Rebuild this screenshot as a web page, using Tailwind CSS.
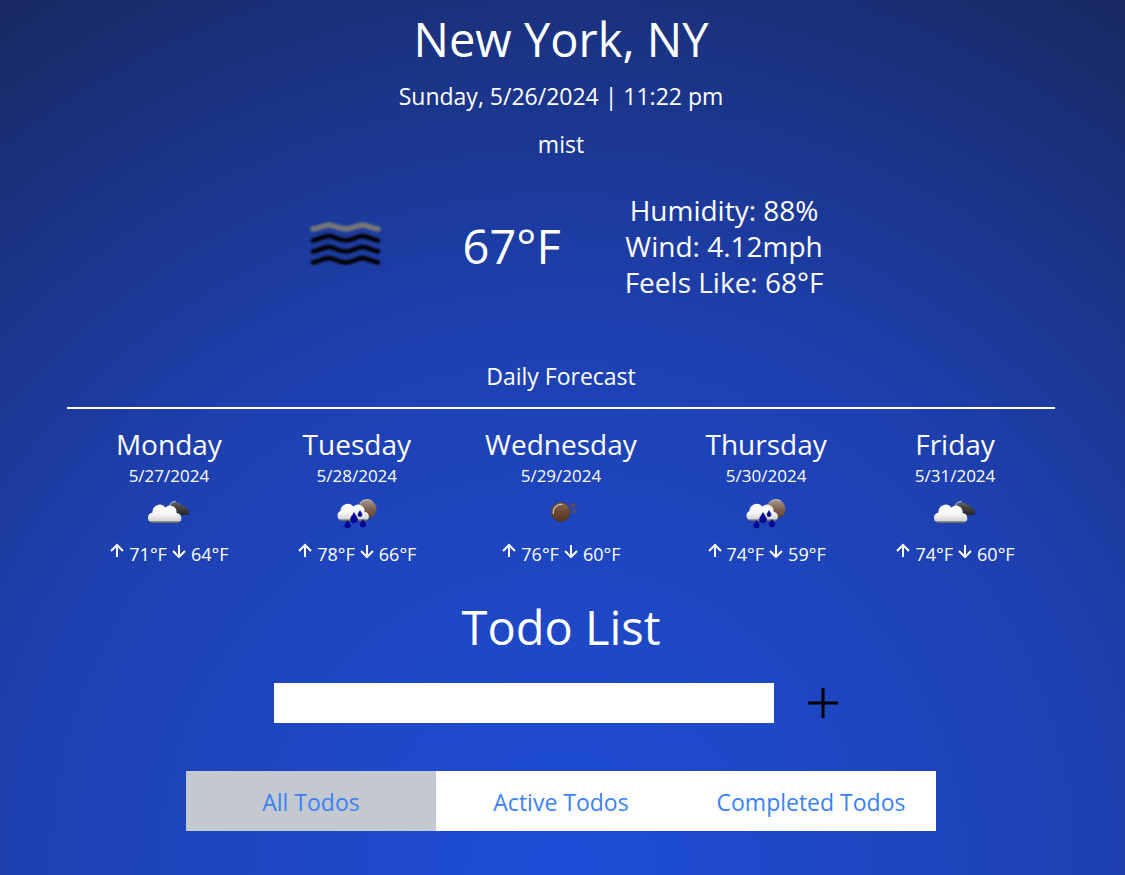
<!DOCTYPE html>
<html lang="en">
<head>
<meta charset="utf-8">
<meta name="viewport" content="width=device-width, initial-scale=1">
<title>Weather &amp; Todo</title>
<script src="https://cdn.jsdelivr.net/npm/@tailwindcss/browser@4"></script>
</head>
<body class="min-h-screen bg-[radial-gradient(circle_at_bottom,#1d4ed8,#1e40af_54%,#172554_108%)] font-['Open_Sans','Noto_Sans',sans-serif] text-white">
<!-- Shared icon shapes -->
<svg class="absolute size-0" aria-hidden="true">
  <defs>
    <linearGradient id="cloudWhite" x1="0" y1="0" x2="0" y2="1"><stop offset="0" stop-color="#fff"/><stop offset=".5" stop-color="#f8f8f8"/><stop offset=".9" stop-color="#d2d2d2"/><stop offset=".92" stop-color="#777"/><stop offset="1" stop-color="#666"/></linearGradient>
    <linearGradient id="cloudDark" x1="0" y1="0" x2="0" y2="1"><stop offset="0" stop-color="#666"/><stop offset=".3" stop-color="#484848"/><stop offset="1" stop-color="#262626"/></linearGradient>
    <linearGradient id="moonFill" x1="0" y1="0" x2="0" y2="1"><stop offset="0" stop-color="#8a6a55"/><stop offset=".5" stop-color="#6b4730"/><stop offset="1" stop-color="#54341f"/></linearGradient>
    <linearGradient id="moonBack" x1="0" y1="0" x2="0" y2="1"><stop offset="0" stop-color="#a89a90"/><stop offset=".5" stop-color="#7d6252"/><stop offset="1" stop-color="#5e3f2b"/></linearGradient>
    <symbol id="up" viewBox="0 0 16 16"><path d="M8 15V3M2 9 8 3 14 9" fill="none" stroke="currentColor" stroke-width="2"/></symbol>
    <symbol id="down" viewBox="0 0 16 16"><path d="M8 3V15M2 9 8 15 14 9" fill="none" stroke="currentColor" stroke-width="2"/></symbol>
    <symbol id="clouds" viewBox="0 0 50 50">
      <path d="M26 27V19A6.500 6 0 0 1 38 17.500 4.800 4.800 0 0 1 43 21 3.300 3.300 0 0 1 43.500 27z" fill="url(#cloudDark)"/>
      <path d="M25.500 18.500a6 6 0 0 1 6-5" fill="none" stroke="#b5b5b5" stroke-width="1.300"/>
      <path d="M10 35A5.300 5.300 0 0 1 8.500 24.500 7.300 7.300 0 0 1 21.500 19.500 6.500 6.500 0 0 1 32.500 25 5.200 5.200 0 0 1 34 35z" fill="url(#cloudWhite)"/>
    </symbol>
    <symbol id="rain" viewBox="0 0 50 50">
      <circle cx="35" cy="21" r="9.500" fill="url(#moonBack)"/>
      <path d="M28 15a9 9 0 0 1 12-2" fill="none" stroke="#c9bfb8" stroke-width="1"/>
      <path d="M10 33A5.300 5.300 0 0 1 8.500 23 7.300 7.300 0 0 1 21.500 18.500 6.500 6.500 0 0 1 32.500 24 4.700 4.700 0 0 1 34 33z" fill="url(#cloudWhite)"/>
      <g fill="#00009c" stroke="#000058" stroke-width=".5"><path d="M22 24.500c-1.500 3-3.500 4.500-3.500 6.700a3.500 3.500 0 0 0 7 0c0-2.200-2-3.700-3.500-6.700zM28 22.500c-1 2-2 2.800-2 4.200a2 2 0 0 0 4 0c0-1.400-1-2.200-2-4.200zM15.500 32.500c-1 2.200-2.700 3.200-2.700 4.900a2.700 2.700 0 0 0 5.400 0c0-1.700-1.700-2.700-2.700-4.900zM31 31.500c-1 2.200-2.700 3.200-2.700 4.900a2.700 2.700 0 0 0 5.400 0c0-1.700-1.700-2.700-2.700-4.900z"/></g>
    </symbol>
    <symbol id="clear" viewBox="0 0 50 50">
      <circle cx="24.700" cy="24" r="9.500" fill="url(#moonFill)" stroke="#4c3434" stroke-width=".8"/>
      <path d="M17.500 26a8 8 0 0 1 9-9.500" fill="none" stroke="#d0beb0" stroke-width="1.200"/>
      <path d="M37 14.500l.8 1.700 1.900.2-1.400 1.300.4 1.900-1.700-1-1.700 1 .4-1.900-1.400-1.300 1.900-.2zM38.500 21l.7 1.400 1.500.2-1.100 1 .3 1.500-1.400-.7-1.400.7.300-1.500-1.100-1 1.500-.2z" fill="#5f4c5a" stroke="#5f4c5a" stroke-width=".8"/>
    </symbol>
  </defs>
</svg>
<main class="flex flex-col items-center pt-[11px] pr-[3px]">
  <h1 class="text-[47px] leading-14">New York, NY</h1>
  <p class="mt-[11px] text-[23px] leading-9">Sunday, 5/26/2024 | 11:22 pm</p>
  <p class="mt-3 text-[23px] leading-9">mist</p>
  <section class="mt-[30px] flex items-center justify-center gap-16" aria-label="Current weather">
    <svg class="size-25" viewBox="0 0 100 100" role="img" aria-label="mist">
      <defs><filter id="soft"><feGaussianBlur stdDeviation=".9"/></filter></defs>
      <g fill="none" stroke-width="4.500" stroke-linecap="round" stroke-linejoin="round" filter="url(#soft)">
        <path d="M14 33C20 32.500 25 29 30 29S40 33 47 33 58 29 63 29 73 32.500 79 33" stroke="#777" stroke-width="5.500"/>
        <path d="M14 44.500C20 43.500 25 40 30 40S40 44.500 47 44.500 58 40 63 40 73 43.500 79 44.500" stroke="#000"/>
        <path d="M14 55.500C20 54.500 25 51 30 51S40 55.500 47 55.500 58 51 63 51 73 54.500 79 55.500" stroke="#000"/>
        <path d="M14 66.500C20 65.500 25 62 30 62S40 66.500 47 66.500 58 62 63 62 73 65.500 79 66.500" stroke="#000"/>
      </g>
    </svg>
    <p class="text-[47px] leading-14">67°F</p>
    <div class="text-center text-[28px] leading-9"><p>Humidity: 88%</p><p>Wind: 4.12mph</p><p>Feels Like: 68°F</p></div>
  </section>
  <section class="w-[88%]" aria-labelledby="forecast">
    <h2 id="forecast" class="mt-[58px] border-b-2 border-white pb-[13px] text-center text-[23px] leading-9">Daily Forecast</h2>
    <ul class="mt-[17px] flex justify-between pr-10 pl-[42px] text-center">
      <li class="flex flex-col items-center">
        <h3 class="text-[28px] leading-9">Monday</h3>
        <p class="mt-0.5 text-[17px] leading-6">5/27/2024</p>
        <svg class="size-[50px]" role="img" aria-label="cloudy"><use href="#clouds"/></svg>
        <p class="mt-0.5 flex gap-1 text-[18px] leading-7"><svg class="mt-0.5 size-4" aria-label="high"><use href="#up"/></svg>71°F<svg class="mt-0.5 size-4" aria-label="low"><use href="#down"/></svg>64°F</p>
      </li>
      <li class="flex flex-col items-center">
        <h3 class="text-[28px] leading-9">Tuesday</h3>
        <p class="mt-0.5 text-[17px] leading-6">5/28/2024</p>
        <svg class="size-[50px]" role="img" aria-label="rain"><use href="#rain"/></svg>
        <p class="mt-0.5 flex gap-1 text-[18px] leading-7"><svg class="mt-0.5 size-4" aria-label="high"><use href="#up"/></svg>78°F<svg class="mt-0.5 size-4" aria-label="low"><use href="#down"/></svg>66°F</p>
      </li>
      <li class="flex flex-col items-center">
        <h3 class="text-[28px] leading-9">Wednesday</h3>
        <p class="mt-0.5 text-[17px] leading-6">5/29/2024</p>
        <svg class="size-[50px]" role="img" aria-label="clear"><use href="#clear"/></svg>
        <p class="mt-0.5 flex gap-1 text-[18px] leading-7"><svg class="mt-0.5 size-4" aria-label="high"><use href="#up"/></svg>76°F<svg class="mt-0.5 size-4" aria-label="low"><use href="#down"/></svg>60°F</p>
      </li>
      <li class="flex flex-col items-center">
        <h3 class="text-[28px] leading-9">Thursday</h3>
        <p class="mt-0.5 text-[17px] leading-6">5/30/2024</p>
        <svg class="size-[50px]" role="img" aria-label="rain"><use href="#rain"/></svg>
        <p class="mt-0.5 flex gap-1 text-[18px] leading-7"><svg class="mt-0.5 size-4" aria-label="high"><use href="#up"/></svg>74°F<svg class="mt-0.5 size-4" aria-label="low"><use href="#down"/></svg>59°F</p>
      </li>
      <li class="flex flex-col items-center">
        <h3 class="text-[28px] leading-9">Friday</h3>
        <p class="mt-0.5 text-[17px] leading-6">5/31/2024</p>
        <svg class="size-[50px]" role="img" aria-label="cloudy"><use href="#clouds"/></svg>
        <p class="mt-0.5 flex gap-1 text-[18px] leading-7"><svg class="mt-0.5 size-4" aria-label="high"><use href="#up"/></svg>74°F<svg class="mt-0.5 size-4" aria-label="low"><use href="#down"/></svg>60°F</p>
      </li>
    </ul>
  </section>
  <h2 class="mt-[31px] text-[47px] leading-14">Todo List</h2>
  <form class="mt-7 flex max-w-full items-center gap-6">
    <input type="text" aria-label="New todo" class="h-10 w-[500px] min-w-0 bg-white px-2 text-[23px] text-black outline-none">
    <button type="button" aria-label="Add todo" class="flex h-10 w-[50px] items-center justify-center text-black">
      <svg class="size-[30px]" viewBox="0 0 30 30" aria-hidden="true"><path d="M15 0V30M0 15H30" fill="none" stroke="currentColor" stroke-width="3"/></svg>
    </button>
  </form>
  <div class="mt-12 grid w-[750px] max-w-full grid-cols-3 bg-white text-[23px] text-[#3b82f6]">
    <button type="button" class="h-15 bg-[#c4c8d0] pt-0.5" aria-pressed="true">All Todos</button>
    <button type="button" class="h-15 pt-0.5" aria-pressed="false">Active Todos</button>
    <button type="button" class="h-15 pt-0.5" aria-pressed="false">Completed Todos</button>
  </div>
</main>
</body>
</html>
